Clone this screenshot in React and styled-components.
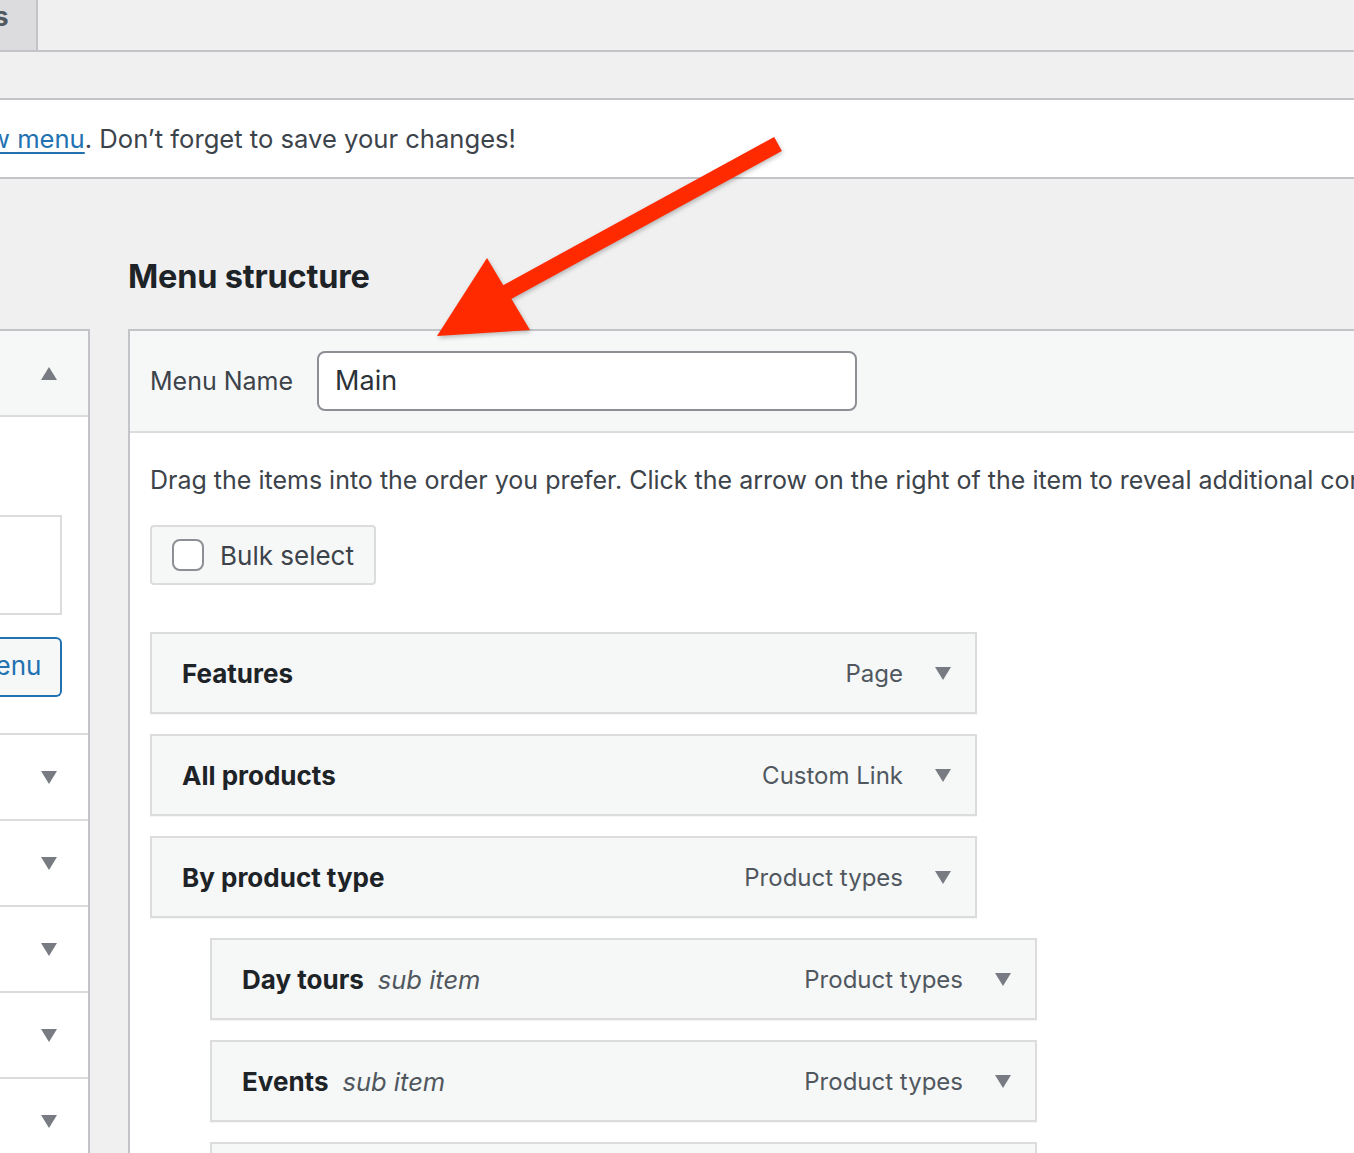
import React from "react";
import styled, { createGlobalStyle } from "styled-components";

const GlobalStyle = createGlobalStyle`
  html, body {
    margin: 0;
    padding: 0;
    background: #f0f0f1;
    overflow: hidden;
  }
  body {
    font-family: Inter, "Noto Sans", "Liberation Sans", sans-serif;
    color: #3c434a;
    width: 1354px;
    height: 1153px;
  }
`;

const Page = styled.div`
  position: relative;
  width: 1354px;
  height: 1153px;
  overflow: hidden;
  background: #f0f0f1;
`;

const TabBar = styled.div`
  display: flex;
  border-bottom: 2px solid #c3c4c7;
  box-sizing: border-box;
  height: 52px;
`;

const Tab = styled.div`
  width: 36px;
  background: #dcdcde;
  border-right: 2px solid #c3c4c7;
  font-size: 26px;
  font-weight: 700;
  color: #50575e;
  line-height: 34px;
  text-indent: -6px;
  overflow: hidden;
`;

const Gap = styled.div`
  height: 46px;
  border-bottom: 2px solid #c3c4c7;
`;

const Notice = styled.div`
  background: #fff;
  border-bottom: 2px solid #c3c4c7;
  display: flex;
  align-items: center;
  font-size: 25.6px;
  color: #3c434a;
  white-space: nowrap;
  box-sizing: border-box;
  height: 79px;
`;

const NoticeText = styled.p`
  margin: 0 0 0 -11px;
  a {
    color: #2271b1;
    text-decoration: underline;
    text-underline-offset: 4px;
  }
`;

const Main = styled.div`
  display: flex;
  gap: 38px;
  padding-top: 78px;
`;

const LeftCol = styled.div`
  width: 90px;
  flex: none;
  margin-top: 72px;
`;

const SidePanel = styled.div`
  background: #fff;
  border: 2px solid #c3c4c7;
  border-left: none;
`;

const SideHead = styled.div`
  height: 84px;
  background: #f6f7f7;
  border-bottom: 2px solid #dcdcde;
  display: flex;
  align-items: center;
  justify-content: flex-end;
  padding-right: 31px;
`;

const SideBody = styled.div`
  padding: 98px 26px 36px 0;
  display: flex;
  flex-direction: column;
  align-items: flex-end;
`;

const SideBox = styled.div`
  width: 80px;
  height: 96px;
  border: 2px solid #dcdcde;
  border-left: none;
`;

const OutlineButton = styled.div`
  margin-top: 22px;
  width: 80px;
  height: 56px;
  border: 2px solid #2271b1;
  border-left: none;
  border-radius: 0 6px 6px 0;
  background: #f6f7f7;
  color: #2271b1;
  font-size: 26px;
  line-height: 54px;
  text-indent: -8px;
  overflow: hidden;
  white-space: nowrap;
`;

const SideRow = styled.div`
  height: 84px;
  border-top: 2px solid #dcdcde;
  display: flex;
  align-items: center;
  justify-content: flex-end;
  padding-right: 31px;
`;

const Tri = styled.span`
  width: 0;
  height: 0;
  border-left: 8px solid transparent;
  border-right: 8px solid transparent;
  ${(p) =>
    p.$up
      ? "border-bottom: 13px solid #787c82;"
      : "border-top: 13px solid #787c82;"}
`;

const RightCol = styled.div`
  flex: 1;
  min-width: 0;
`;

const Heading = styled.h2`
  margin: 0 0 32px;
  font-size: 32.5px;
  font-weight: 700;
  color: #1d2327;
  line-height: 40px;
  letter-spacing: -0.2px;
`;

const StructPanel = styled.div`
  border: 2px solid #c3c4c7;
  border-right: none;
  background: #fff;
  height: 900px;
`;

const NameHead = styled.div`
  height: 100px;
  background: #f6f7f7;
  border-bottom: 2px solid #dcdcde;
  display: flex;
  align-items: center;
  padding-left: 20px;
  gap: 24px;
`;

const Label = styled.label`
  font-size: 25px;
  color: #3c434a;
`;

const NameInput = styled.div`
  border: 2px solid #8c8f94;
  border-radius: 8px;
  background: #fff;
  font-size: 27px;
  color: #2c3338;
  line-height: 56px;
  padding-left: 16px;
  box-sizing: border-box;
  height: 60px;
  width: 540px;
`;

const StructBody = styled.div`
  padding: 30px 20px;
`;

const Hint = styled.p`
  margin: 0;
  font-size: 25px;
  color: #3c434a;
  white-space: nowrap;
  line-height: 34px;
`;

const BulkButton = styled.div`
  margin-top: 28px;
  display: inline-flex;
  align-items: center;
  gap: 16px;
  height: 60px;
  box-sizing: border-box;
  padding: 0 20px;
  background: #f6f7f7;
  border: 2px solid #dcdcde;
  border-radius: 4px;
  font-size: 26px;
  color: #3c434a;
`;

const Check = styled.span`
  width: 28px;
  height: 28px;
  border: 2px solid #8c8f94;
  border-radius: 8px;
  background: #fff;
`;

const Items = styled.div`
  margin-top: 47px;
  display: flex;
  flex-direction: column;
  gap: 20px;
`;

const Item = styled.div`
  width: 827px;
  height: 82px;
  box-sizing: border-box;
  margin-left: ${(p) => (p.$depth ? p.$depth * 60 : 0)}px;
  background: #f6f7f7;
  border: 2px solid #dcdcde;
  box-shadow: 0 1px 1px rgba(0, 0, 0, 0.04);
  display: flex;
  align-items: center;
  padding: 0 24px 0 30px;
`;

const Title = styled.span`
  font-size: 26px;
  font-weight: 700;
  color: #1d2327;
`;

const Sub = styled.span`
  margin-left: 14px;
  font-size: 25.5px;
  font-style: italic;
  color: #50575e;
`;

const Type = styled.span`
  margin-left: auto;
  margin-right: 32px;
  font-size: 24px;
  color: #50575e;
`;

const ArrowLayer = styled.svg`
  position: absolute;
  left: 0;
  top: 0;
  pointer-events: none;
  filter: drop-shadow(1px 2px 2px rgba(0, 0, 0, 0.25));
`;

const items = [
  { title: "Features", type: "Page" },
  { title: "All products", type: "Custom Link" },
  { title: "By product type", type: "Product types" },
  { title: "Day tours", type: "Product types", depth: 1 },
  { title: "Events", type: "Product types", depth: 1 },
  { title: "", type: "", depth: 1 },
];

export default function App() {
  return (
    <Page>
      <GlobalStyle />
      <TabBar>
        <Tab>s</Tab>
      </TabBar>
      <Gap />
      <Notice>
        <NoticeText>
          <a href="#">w menu</a>. Don’t forget to save your changes!
        </NoticeText>
      </Notice>
      <Main>
        <LeftCol>
          <SidePanel>
            <SideHead>
              <Tri $up />
            </SideHead>
            <SideBody>
              <SideBox />
              <OutlineButton>Menu</OutlineButton>
            </SideBody>
            {[0, 1, 2, 3, 4].map((i) => (
              <SideRow key={i}>
                <Tri />
              </SideRow>
            ))}
          </SidePanel>
        </LeftCol>
        <RightCol>
          <Heading>Menu structure</Heading>
          <StructPanel>
            <NameHead>
              <Label>Menu Name</Label>
              <NameInput>Main</NameInput>
            </NameHead>
            <StructBody>
              <Hint>
                Drag the items into the order you prefer. Click the arrow on the
                right of the item to reveal additional configuration options.
              </Hint>
              <BulkButton>
                <Check />
                Bulk select
              </BulkButton>
              <Items>
                {items.map((it, i) => (
                  <Item key={i} $depth={it.depth}>
                    <Title>{it.title}</Title>
                    {it.depth && it.title ? <Sub>sub item</Sub> : null}
                    {it.type ? <Type>{it.type}</Type> : null}
                    {it.type ? <Tri /> : null}
                  </Item>
                ))}
              </Items>
            </StructBody>
          </StructPanel>
        </RightCol>
      </Main>
      <ArrowLayer width="1354" height="1153" viewBox="0 0 1354 1153">
        <line x1="778" y1="144" x2="500" y2="296" stroke="#ff2a00" strokeWidth="16" />
        <polygon points="487,258 437,336 530,330" fill="#ff2a00" />
      </ArrowLayer>
    </Page>
  );
}
